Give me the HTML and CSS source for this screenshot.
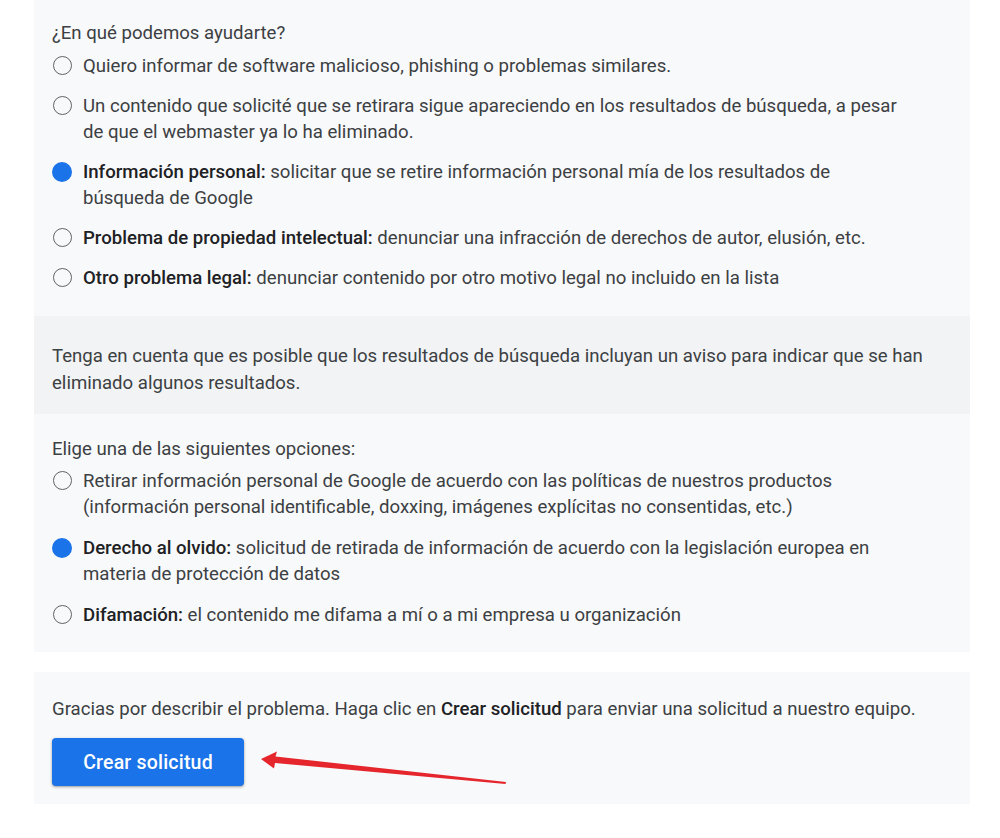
FILE: index.html
```html
<!DOCTYPE html>
<html lang="es">
<head>
<meta charset="utf-8">
<title>Solicitud</title>
<link rel="stylesheet" href="styles.css">
</head>
<body>
<main class="wrap">
  <section class="panel">
    <p class="question">¿En qué podemos ayudarte?</p>
    <ul class="options">
      <li class="option"><span class="radio"></span><span class="label">Quiero informar de software malicioso, phishing o problemas similares.</span></li>
      <li class="option"><span class="radio"></span><span class="label">Un contenido que solicité que se retirara sigue apareciendo en los resultados de búsqueda, a pesar de que el webmaster ya lo ha eliminado.</span></li>
      <li class="option"><span class="radio checked"></span><span class="label"><b>Información personal:</b> solicitar que se retire información personal mía de los resultados de búsqueda de Google</span></li>
      <li class="option"><span class="radio"></span><span class="label"><b>Problema de propiedad intelectual:</b> denunciar una infracción de derechos de autor, elusión, etc.</span></li>
      <li class="option"><span class="radio"></span><span class="label"><b>Otro problema legal:</b> denunciar contenido por otro motivo legal no incluido en la lista</span></li>
    </ul>
  </section>
  <section class="notice">
    <p>Tenga en cuenta que es posible que los resultados de búsqueda incluyan un aviso para indicar que se han eliminado algunos resultados.</p>
  </section>
  <section class="panel panel-second">
    <p class="question">Elige una de las siguientes opciones:</p>
    <ul class="options">
      <li class="option"><span class="radio"></span><span class="label">Retirar información personal de Google de acuerdo con las políticas de nuestros productos (información personal identificable, doxxing, imágenes explícitas no consentidas, etc.)</span></li>
      <li class="option"><span class="radio checked"></span><span class="label"><b>Derecho al olvido:</b> solicitud de retirada de información de acuerdo con la legislación europea en materia de protección de datos</span></li>
      <li class="option"><span class="radio"></span><span class="label"><b>Difamación:</b> el contenido me difama a mí o a mi empresa u organización</span></li>
    </ul>
  </section>
  <section class="panel panel-final">
    <p class="thanks">Gracias por describir el problema. Haga clic en <b>Crear solicitud</b> para enviar una solicitud a nuestro equipo.</p>
    <button class="btn" type="button">Crear solicitud</button>
  </section>
</main>
<svg class="arrow" width="1000" height="838" viewBox="0 0 1000 838" aria-hidden="true">
  <polygon points="261,759 277,751.5 275.5,756.5 506,782 505.5,784 275,763 274,768.5" fill="#e5262c"/>
</svg>
</body>
</html>
```
FILE: styles.css
```css
* { box-sizing: border-box; }
html, body { margin: 0; padding: 0; background: #ffffff; }
body {
  font-family: Roboto, "Noto Sans", Arial, sans-serif;
  font-size: 18.6px;
  line-height: 26px;
  color: #3c4043;
  position: relative;
  width: 1000px;
  height: 838px;
  overflow: hidden;
}
p { margin: 0; }
b { font-weight: 500; color: #202124; }
.wrap {
  margin-left: 34px;
  width: 936px;
  display: flex;
  flex-direction: column;
}
.panel {
  background: #f8f9fa;
  padding: 20px 18px 25px;
}
.question { margin-bottom: 7px; }
.options {
  list-style: none;
  margin: 0;
  padding: 0;
  display: flex;
  flex-direction: column;
  gap: 14px;
}
.option {
  display: flex;
  align-items: flex-start;
  gap: 11px;
}
.label { max-width: 825px; }
.radio {
  flex: none;
  width: 19px;
  height: 19px;
  margin-top: 3px;
  margin-left: 1px;
  border: 1.5px solid #5f6368;
  border-radius: 50%;
}
.radio.checked {
  width: 20px;
  height: 20px;
  margin-left: 0;
  margin-top: 3px;
  border: none;
  background: #1a73e8;
}
.notice {
  background: #f1f3f4;
  padding: 27px 18px 17px;
}
.notice p { line-height: 27px; max-width: 900px; }
.panel-second { padding-top: 22px; padding-bottom: 24px; margin-bottom: 20px; }
.panel-second .question { margin-bottom: 6px; }
.panel-second .options { gap: 15px; }
.panel-final {
  padding: 24px 18px 18px;
  display: flex;
  flex-direction: column;
  align-items: flex-start;
  gap: 16px;
}
.btn {
  width: 192px;
  height: 48px;
  border: none;
  border-radius: 4px;
  background: #1a73e8;
  color: #ffffff;
  font-family: Roboto, "Noto Sans", Arial, sans-serif;
  font-size: 19.5px;
  font-weight: 500;
  letter-spacing: 0.2px;
  box-shadow: 0 1px 3px rgba(60, 64, 67, 0.35), 0 1px 2px rgba(60, 64, 67, 0.2);
}
.arrow {
  position: absolute;
  top: 0;
  left: 0;
  pointer-events: none;
}
```
